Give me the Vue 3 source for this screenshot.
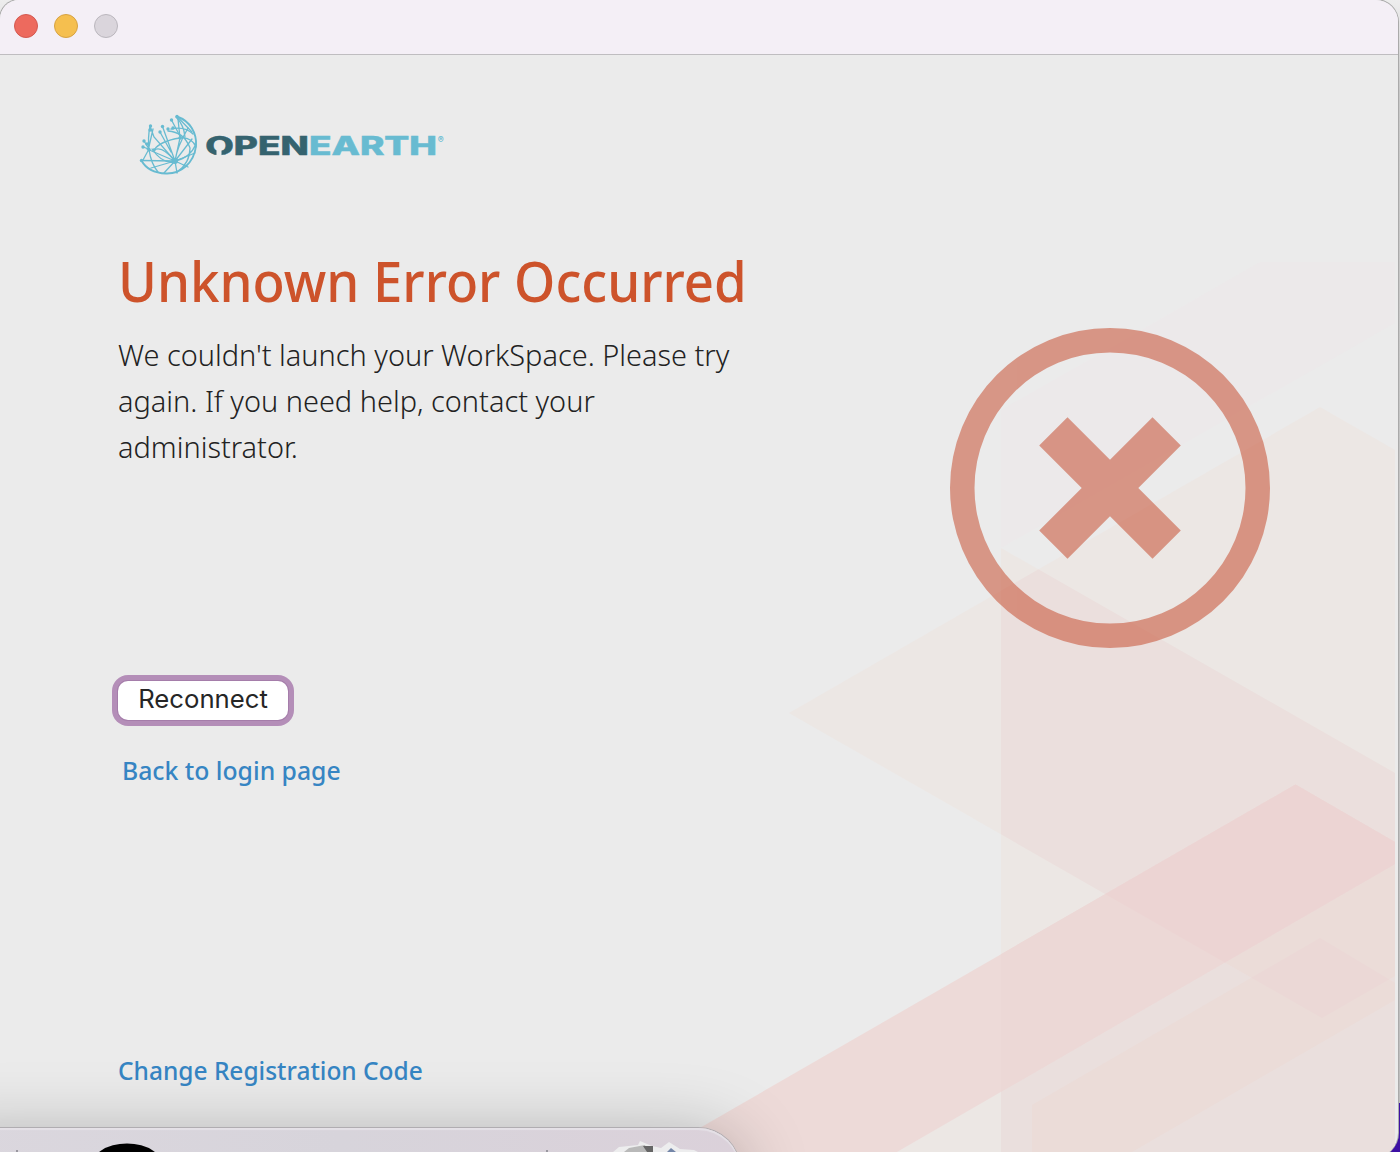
<script setup>
const lines = [
  "We couldn't launch your WorkSpace. Please try",
  'again. If you need help, contact your',
  'administrator.',
]
const nodes = [
  [177, 116.5], [171.5, 120], [162.5, 126.5], [150.5, 126], [150, 130],
  [160, 132], [144, 141], [147, 144], [143, 147], [149, 149.5],
  [141.5, 160.5], [154, 150], [180, 138], [173, 128], [168, 129],
]
const diamond = '1320,407 1395,450 1395,976 1322,1018 789,713'
const wedge = '1001,548 1395,773 1395,1152 1001,1152'
const corner = '1395,860 1395,1152 897,1152'
const beam = '1295.5,784.5 1395,842 1395,864 897,1152 658,1152'
const stub = '1320,938 1395,983 1395,1000 1132,1152 1032,1152 1032,1105'
</script>

<template>
  <div class="desktop">
    <div class="window">
      <header class="titlebar">
        <span class="light close"></span>
        <span class="light minimise"></span>
        <span class="light zoom"></span>
      </header>
      <main class="body">
        <svg class="art" viewBox="0 55 1395 1097" width="1395" height="1097">
          <defs>
            <clipPath id="in-diamond"><polygon :points="diamond" /></clipPath>
            <clipPath id="in-wedge"><polygon :points="wedge" /></clipPath>
          </defs>
          <polygon points="1260,262 1395,262 1395,323 1001,548 1001,410" fill="#ece9ea" />
          <polygon :points="diamond" fill="#ece7e4" />
          <polygon :points="wedge" fill="#ece7e4" />
          <polygon :points="corner" fill="#ece7e4" />
          <g clip-path="url(#in-wedge)">
            <polygon :points="diamond" fill="#ebdfdd" />
            <polygon :points="corner" fill="#eadfdd" />
            <polygon :points="stub" fill="#ebdcd8" />
            <g clip-path="url(#in-diamond)">
              <polygon :points="corner" fill="#ebdcd8" />
              <polygon :points="stub" fill="#ebd8d6" />
            </g>
          </g>
          <polygon :points="beam" fill="#eddad8" />
          <g clip-path="url(#in-wedge)">
            <polygon :points="beam" fill="#ecd8d6" />
            <polygon :points="beam" fill="#ecd4d3" clip-path="url(#in-diamond)" />
          </g>
        </svg>
        <section class="copy">
          <svg class="logo" viewBox="134 110 320 70" width="320" height="70">
            <g fill="none" stroke="#68bbd1" stroke-width="1.3" stroke-linecap="round">
              <path d="M177 116.500C190 121 197 133 196 146C194 163 181 174 166 173.500C154 173 146 169 141.500 160.500" stroke-width="1.9" />
              <path d="M150 126C147 141 148 160 158 172M150 126L154 137L175 161M162.500 126.500L175 161M171.500 120L181 138M177 116.500L192 132M160 132L171 152M144 141L149 149L143 147M149 149L143 160M153 129L148 151" />
              <path d="M175 161L141.500 160.500M175 161L147 149M175 161L151 168M175 161L164 173M175 161L177 173M175 161L188 167M175 161L195 153M175 161L192 139M175 161L180 138L178 119M175 161Q162 145 154 150M175 161Q177 147 188 128" />
              <path d="M171 129Q185 126 193 134M154 150Q160 141 180 138Q192 137 196 147M152 149Q163 165 175 161Q190 158 196 144M168 131Q184 132 190 148Q190 163 177 172M176 117Q184 125 185 137" />
            </g>
            <g fill="#68bbd1">
              <circle v-for="(p, i) in nodes" :key="i" :cx="p[0]" :cy="p[1]" r="1.7" />
              <circle cx="175" cy="161" r="3" />
            </g>
            <g class="mark">
              <text x="205.300" y="155.200" textLength="103.500" lengthAdjust="spacingAndGlyphs" fill="#35636f" stroke="#35636f">OPEN</text>
              <text x="309" y="155.200" textLength="128" lengthAdjust="spacingAndGlyphs" fill="#68bbd1" stroke="#68bbd1">EARTH</text>
            </g>
            <rect x="216.500" y="149" width="5" height="8" fill="#ebebeb" />
            <text x="437.800" y="143" class="reg" fill="#68bbd1">®</text>
          </svg>
          <h1><span>Unknown Error Occurred</span></h1>
          <p class="message">
            <span v-for="line in lines" :key="line" class="line">{{ line }}</span>
          </p>
          <button class="reconnect" type="button">Reconnect</button>
          <a class="link back"><span>Back to login page</span></a>
          <a class="link change"><span>Change Registration Code</span></a>
        </section>
        <svg class="error" viewBox="0 0 320 320" width="320" height="320">
          <g fill="#c75033" opacity=".55">
            <path fill-rule="evenodd" d="M160 0a160 160 0 1 0 0 320a160 160 0 1 0 0-320zM160 24.500a135.500 135.500 0 1 1 0 271a135.500 135.500 0 1 1 0-271z" />
            <path d="M117.500 89.200L160 131.700L202.500 89.200L230.800 117.500L188.300 160L230.800 202.500L202.500 230.800L160 188.300L117.500 230.800L89.200 202.500L131.700 160L89.200 117.500z" />
          </g>
        </svg>
      </main>
    </div>
    <div class="dock">
      <svg viewBox="0 1128 738 24" width="738" height="24">
        <ellipse cx="127" cy="1168" rx="37" ry="24.500" fill="#000" />
        <path d="M17 1150v2M547 1150v2" stroke="#99979f" stroke-width="2" />
        <path d="M613 1152l6-5 19-2 2-4 12 5 9 2 8-6 11 7 14 1 4 2z" fill="#ededee" />
        <path d="M624 1152l5-4 16-3 2 7z" fill="#b9b9b9" />
        <path d="M643 1146l10 0 0 6h-6z" fill="#666" />
        <path d="M667 1152l4-4 5 4z" fill="#7486a8" />
      </svg>
    </div>
  </div>
</template>

<style>
body { margin: 0; }
</style>

<style scoped>
.desktop {
  position: relative;
  width: 1400px;
  height: 1152px;
  overflow: hidden;
  background: linear-gradient(#ededed 0, #c8c8c8 90px, #bdbdbd 1103px, #3d10a4 1103px);
  font-family: "Noto Sans", "Open Sans", sans-serif;
}
.window {
  box-sizing: border-box;
  width: 1398px;
  height: 1157px;
  overflow: hidden;
  background: #ebebeb;
  border-radius: 19px 22px 24px 0;
  box-shadow: 0 0 0 1px #aaa;
}
.titlebar {
  box-sizing: border-box;
  display: flex;
  gap: 16px;
  height: 55px;
  padding: 14px;
  background: #f4eff6;
  border-bottom: 1px solid #bfbdc0;
}
.light {
  box-sizing: border-box;
  width: 24px;
  height: 24px;
  border: 1px solid;
  border-radius: 50%;
}
.close { background: #ed6a5e; border-color: #d35950; }
.minimise { background: #f5bf4f; border-color: #d6a243; }
.zoom { background: #dad5dc; border-color: #bab6bd; }
.body {
  position: relative;
  display: flex;
  height: 1097px;
}
.art { position: absolute; left: 0; top: 0; }
.copy {
  position: relative;
  display: flex;
  flex-direction: column;
  align-items: flex-start;
  flex: none;
  width: 950px;
  padding: 55px 0 0 118px;
  box-sizing: border-box;
}
.logo { display: block; margin-left: 16px; }
.mark { font: 800 25.300px Inter, sans-serif; stroke-width: .5px; }
.reg { font: 700 9px Inter, sans-serif; }
h1 {
  margin: 61px 0 0;
  font-size: 55.500px;
  line-height: 80px;
  font-weight: 500;
  color: #cd532b;
  white-space: nowrap;
}
h1 span, .line, .link span { display: block; width: max-content; transform-origin: 0 50%; }
h1 span { transform: scaleX(.95); }
.message {
  margin: 11px 0 0;
  font-size: 30px;
  line-height: 46px;
  font-weight: 350;
  color: #222;
  white-space: nowrap;
}
.line { transform: scaleX(.964); }
.reconnect {
  box-sizing: border-box;
  width: 170px;
  height: 39px;
  margin: 211px 0 0 0;
  padding: 0 0 3px;
  border: 0;
  border-radius: 10px;
  background: #fff;
  box-shadow: 0 0 0 1px #a57daa, 0 0 0 6px #b48eb8;
  font: 400 25.700px/34px Inter, sans-serif;
  color: #262626;
}
.link {
  font-size: 26px;
  line-height: 36px;
  font-weight: 500;
  color: #3685c3;
  white-space: nowrap;
}
.back { margin: 32px 0 0 4px; }
.back span { transform: scaleX(.952); }
.change { margin-top: 264px; }
.change span { transform: scaleX(.942); }
.error { position: relative; flex: none; margin-top: 273px; }
.dock {
  position: absolute;
  left: -60px;
  top: 1128px;
  box-sizing: border-box;
  width: 800px;
  height: 100px;
  padding-left: 60px;
  background: linear-gradient(90deg, #dbd7de, #d7d4db 50%, #dbd1da);
  border-radius: 0 42px 42px 0;
  box-shadow: inset 0 2px 1px #e5e1e7, 0 0 0 1px #b0adb1, 0 8px 70px rgba(0, 0, 0, .28);
}
.dock svg { display: block; }
</style>
